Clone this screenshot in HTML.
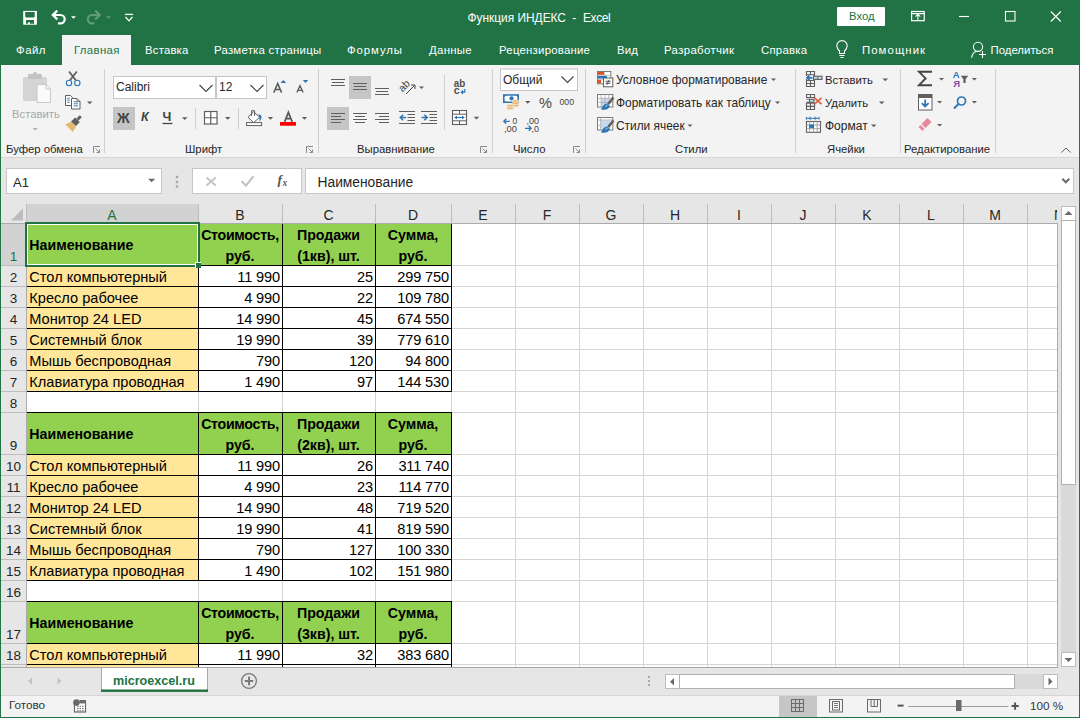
<!DOCTYPE html><html><head><meta charset="utf-8"><style>
*{margin:0;padding:0;box-sizing:border-box}
html,body{width:1080px;height:718px;overflow:hidden;background:#f3f3f3;font-family:"Liberation Sans",sans-serif;position:relative}
div{position:absolute}
.t{white-space:nowrap;line-height:1}
svg{position:absolute;overflow:visible}
.tab{top:43px;color:#fff;font-size:11.4px;white-space:nowrap;line-height:14px}
.rt{font-size:11.3px;color:#262626;white-space:nowrap;line-height:13px}
.gl{top:143px;font-size:11.3px;color:#262626;white-space:nowrap;line-height:13px}
.sep{width:1px;background:#d4d4d4}
.ch{font-size:14px;color:#262626;text-align:center;line-height:18px;top:206px;height:18px}
.rh{font-size:13.5px;color:#262626;text-align:center;left:1px;width:25px;line-height:14px}
.c{font-size:14.6px;color:#000;white-space:nowrap;line-height:16px}
.cb{font-size:14.2px;font-weight:bold;color:#000;white-space:nowrap;line-height:16px}
</style></head><body>
<div style="left:0;top:0;width:1080px;height:65px;background:#217346"></div>
<div class="t" style="left:467.5px;top:12.5px;color:#fff;font-size:11.9px">Функция ИНДЕКС</div>
<div class="t" style="left:572.3px;top:12.5px;color:#fff;font-size:11.9px">-</div>
<div class="t" style="left:583px;top:12.5px;color:#fff;font-size:11.9px;letter-spacing:-0.35px">Excel</div>
<div style="left:62px;top:35px;width:69px;height:30px;background:#f3f3f3"></div>
<div style="left:837px;top:7px;width:48px;height:19px;background:#fff;border-radius:1px"></div>
<div class="t" style="left:849px;top:10.5px;font-size:11.3px;color:#217346">Вход</div>
<div class="tab" style="left:16px;letter-spacing:0.5px">Файл</div>
<div class="tab" style="left:74px;letter-spacing:0.33px;color:#217346">Главная</div>
<div class="tab" style="left:145px;letter-spacing:0.17px">Вставка</div>
<div class="tab" style="left:214px;letter-spacing:0.24px">Разметка страницы</div>
<div class="tab" style="left:347px;letter-spacing:0.9px">Формулы</div>
<div class="tab" style="left:429px;letter-spacing:0.3px">Данные</div>
<div class="tab" style="left:499px;letter-spacing:0.23px">Рецензирование</div>
<div class="tab" style="left:617px;letter-spacing:0.2px">Вид</div>
<div class="tab" style="left:664px;letter-spacing:0.36px">Разработчик</div>
<div class="tab" style="left:761px;letter-spacing:0.22px">Справка</div>
<div class="tab" style="left:862px;letter-spacing:1.05px">Помощник</div>
<div class="tab" style="left:990.5px;letter-spacing:0px">Поделиться</div>
<div style="left:1px;top:65px;width:1078px;height:93px;background:#f3f3f3;border-bottom:1px solid #d6d6d6"></div>
<svg style="left:0;top:0" width="1080" height="160" viewBox="0 0 1080 160">
<rect x="23.2" y="10.9" width="13.7" height="13.8" fill="#ffffff"/>
<path d="M25.2 12H34.7V16.5L33.8 17.4H26.1L25.2 16.5Z" fill="#217346"/>
<path d="M26 20H34V23.7H30V22.3H28V23.7H26Z" fill="#217346"/>
<path d="M53 15H60.5A4.2 4.2 0 0 1 60.5 23.4H58" fill="none" stroke="#ffffff" stroke-width="2.2"/>
<path d="M57.3 10.6L52.8 15L57.3 19.4" fill="none" stroke="#ffffff" stroke-width="2.2"/>
<path d="M71 16.2H76L73.5 18.7Z" fill="#ffffff"/>
<path d="M99.5 15H92A4.2 4.2 0 0 0 92 23.4H94.5" fill="none" stroke="#5e9c78" stroke-width="2.2"/>
<path d="M95.2 10.6L99.7 15L95.2 19.4" fill="none" stroke="#5e9c78" stroke-width="2.2"/>
<path d="M106 16.2H111L108.5 18.7Z" fill="#5e9c78"/>
<path d="M125 14.4H133" stroke="#ffffff" stroke-width="1.3"/>
<path d="M125.5 17L129 20.8L132.5 17" fill="none" stroke="#ffffff" stroke-width="1.2"/>
<rect x="911.6" y="11.5" width="12.6" height="9.2" fill="none" stroke="#ffffff" stroke-width="1.2"/>
<path d="M911.6 13.6H924.2" stroke="#ffffff" stroke-width="1.2"/>
<path d="M917.9 20.5V14.3M915.5 16.7L917.9 14.3L920.3 16.7" fill="none" stroke="#ffffff" stroke-width="1.1"/>
<path d="M959 16.5H969" stroke="#ffffff" stroke-width="1.1"/>
<rect x="1005.5" y="11.5" width="9.5" height="9.5" fill="none" stroke="#ffffff" stroke-width="1.1"/>
<path d="M1050.8 11.5L1060.8 21.5M1060.8 11.5L1050.8 21.5" stroke="#ffffff" stroke-width="1.1"/>
<path d="M839.5 51C837.5 49.3 836.8 47.6 836.8 45.8A5.2 5.2 0 0 1 847.2 45.8C847.2 47.6 846.5 49.3 844.5 51V53.5H839.5Z" fill="none" stroke="#ffffff" stroke-width="1.1"/>
<path d="M839.5 55.5H844.5M840.5 57.5H843.5" stroke="#ffffff" stroke-width="1"/>
<circle cx="978" cy="46.8" r="4.6" fill="none" stroke="#ffffff" stroke-width="1.1"/>
<path d="M971.6 57.8C972 54.5 973.5 52.3 976 51.4" fill="none" stroke="#ffffff" stroke-width="1.1"/>
<path d="M979 54.5H986M982.5 51V58" stroke="#ffffff" stroke-width="1.1"/>
<rect x="23" y="77" width="24" height="24" rx="1.5" fill="#d4d4d4"/>
<rect x="28" y="74" width="14" height="5" rx="1" fill="#c4c4c4"/>
<circle cx="35" cy="73.5" r="1.8" fill="#c4c4c4"/>
<path d="M37 84.5H46L50.5 89V102.5H37Z" fill="#fafafa" stroke="#c8c8c8" stroke-width="1"/>
<path d="M46 84.5V89H50.5" fill="none" stroke="#c8c8c8" stroke-width="1"/>
<path d="M32.5 128H38L35.25 130.75Z" fill="#b8b8b8"/>
<path d="M69 71.5L75.8 80.3M76.8 71.5L70 80.3" stroke="#5f5f5f" stroke-width="1.8"/>
<circle cx="69" cy="83" r="2.7" fill="#f3f3f3" stroke="#2e75b6" stroke-width="1.1"/>
<circle cx="77.3" cy="83" r="2.7" fill="#f3f3f3" stroke="#2e75b6" stroke-width="1.1"/>
<path d="M65.5 95.5H70.5L72.5 97.5V105.5H65.5Z" fill="#fff" stroke="#5f5f5f" stroke-width="1"/>
<path d="M71.5 98.5H77L80 101.5V109H71.5Z" fill="#fff" stroke="#5f5f5f" stroke-width="1"/>
<path d="M77 98.5V101.5H80" fill="none" stroke="#5f5f5f" stroke-width="0.8"/>
<path d="M67.2 98.2H69.8M67.2 100.2H69.8M67.2 102.3H69.8M73.6 101.8H78M73.6 103.8H78M73.6 105.9H78" stroke="#2e75b6" stroke-width="0.9"/>
<path d="M87 101.5H92.5L89.75 104.25Z" fill="#5f5f5f"/>
<path d="M65.3 124.5L71.5 121.8L76 126.4L72.8 132Z" fill="#e5b86a"/>
<path d="M71 121.5L75.2 117.5L79.8 122L76 126Z" fill="#5f5f5f"/>
<path d="M76.5 118.5L79.8 115.2L81.8 117.2L78.5 120.5Z" fill="#5f5f5f"/>
<path d="M93.5 153V146.5H100" fill="none" stroke="#8a8a8a" stroke-width="1"/>
<path d="M95.5 148.5L99.5 152.5M96.5 152.5H99.5V149.5" fill="none" stroke="#8a8a8a" stroke-width="1"/>
<path d="M306.5 153V146.5H313" fill="none" stroke="#8a8a8a" stroke-width="1"/>
<path d="M308.5 148.5L312.5 152.5M309.5 152.5H312.5V149.5" fill="none" stroke="#8a8a8a" stroke-width="1"/>
<path d="M480.5 153V146.5H487" fill="none" stroke="#8a8a8a" stroke-width="1"/>
<path d="M482.5 148.5L486.5 152.5M483.5 152.5H486.5V149.5" fill="none" stroke="#8a8a8a" stroke-width="1"/>
<path d="M573.5 153V146.5H580" fill="none" stroke="#8a8a8a" stroke-width="1"/>
<path d="M575.5 148.5L579.5 152.5M576.5 152.5H579.5V149.5" fill="none" stroke="#8a8a8a" stroke-width="1"/>
<rect x="113.5" y="76.5" width="102" height="22" fill="#fff" stroke="#c6c6c6"/>
<rect x="216.5" y="76.5" width="50" height="22" fill="#fff" stroke="#c6c6c6"/>
<path d="M199.5 85L206 91.5L212.5 85" fill="none" stroke="#444444" stroke-width="1.1"/>
<path d="M250.5 85L257 91.5L263.5 85" fill="none" stroke="#444444" stroke-width="1.1"/>
<path d="M280.5 83L283.4 80L286.3 83Z" fill="#2e75b6"/>
<path d="M302.8 80H308.2L305.5 83Z" fill="#2e75b6"/>
<rect x="113" y="107" width="22" height="23" fill="#c5c5c5"/>
<path d="M182 117.2H187.5L184.75 119.95Z" fill="#5f5f5f"/>
<path d="M162.5 123.5H172.5" stroke="#444444" stroke-width="1.3"/>
<path d="M195.5 108V129" stroke="#d0d0d0"/>
<rect x="204.5" y="111.5" width="12.5" height="12.5" fill="#fff" stroke="#5f5f5f" stroke-width="1.2"/>
<path d="M210.75 111.5V124M204.5 117.75H217" stroke="#5f5f5f" stroke-width="1.2"/>
<path d="M225 117H230.5L227.75 119.75Z" fill="#5f5f5f"/>
<path d="M238.5 108V129" stroke="#d0d0d0"/>
<path d="M248 117.3L253.6 111.8L259.7 117.2L253.6 122.6Z" fill="#fff" stroke="#5f5f5f" stroke-width="1"/>
<path d="M251.6 116V110.7H254.6V115.8" fill="none" stroke="#5f5f5f" stroke-width="1"/>
<path d="M258.3 114.2C261.5 114.6 263 117.3 259.6 121.4L259.4 117.2Z" fill="#2e75b6"/>
<rect x="246.6" y="122.6" width="15" height="3" fill="#fff" stroke="#5f5f5f" stroke-width="1"/>
<path d="M267.8 117H273.2L270.5 119.69999999999999Z" fill="#5f5f5f"/>
<rect x="280" y="122" width="16" height="3.7" fill="#ff0000"/>
<path d="M284.6 121.9L288.4 112.4L292.2 121.9M285.9 118.6H290.9" fill="none" stroke="#595959" stroke-width="1.7"/>
<path d="M301.8 117H307.2L304.5 119.69999999999999Z" fill="#5f5f5f"/>
<path d="M273.8 92.6L277.7 83.4L281.6 92.6M275.2 89.6H280.2" fill="none" stroke="#595959" stroke-width="1.5"/>
<path d="M296.9 92.6L300 85.7L303.1 92.6M298 90.3H302" fill="none" stroke="#595959" stroke-width="1.3"/>
<rect x="349" y="76" width="22" height="23" fill="#c5c5c5"/>
<rect x="327" y="107" width="22" height="23" fill="#c5c5c5"/>
<path d="M331 79.5H345M332 82.5H344M331 85.5H345" stroke="#5f5f5f" stroke-width="1"/>
<path d="M353 83.5H367M354 86.5H366M353 89.5H367" stroke="#5f5f5f" stroke-width="1"/>
<path d="M375 88.5H389M376 91.5H388M375 94.5H389" stroke="#5f5f5f" stroke-width="1"/>
<path d="M331 113.5H345M331 116.5H341M331 119.5H345M331 122.5H341" stroke="#5f5f5f" stroke-width="1"/>
<path d="M353 113.5H367M355 116.5H365M353 119.5H367M355 122.5H365" stroke="#5f5f5f" stroke-width="1"/>
<path d="M375 113.5H389M379 116.5H389M375 119.5H389M379 122.5H389" stroke="#5f5f5f" stroke-width="1"/>
<path d="M399 111.5H415M407.5 114.5H415M407.5 117.5H415M407.5 120.5H415M399 123.5H415" stroke="#5f5f5f" stroke-width="1"/>
<path d="M406 117.5H400.5M403.2 114.8L400.3 117.5L403.2 120.2" fill="none" stroke="#2e75b6" stroke-width="1.5"/>
<path d="M421 111.5H437M429.5 114.5H437M429.5 117.5H437M429.5 120.5H437M421 123.5H437" stroke="#5f5f5f" stroke-width="1"/>
<path d="M421.5 117.5H427M424.3 114.8L427.2 117.5L424.3 120.2" fill="none" stroke="#2e75b6" stroke-width="1.5"/>
<g transform="translate(404.5 85) rotate(-45)"><text x="-6.8" y="3.8" font-family="Liberation Sans" font-size="10.5" fill="#444444">ab</text></g>
<path d="M406 94L414.5 85.5M411 85H415V89" fill="none" stroke="#444444" stroke-width="1"/>
<path d="M419 86.5H424L421.5 89.0Z" fill="#5f5f5f"/>
<path d="M444.5 75V130" stroke="#d0d0d0"/>
<text x="453.8" y="86.5" font-family="Liberation Sans" font-size="10.6" font-weight="bold" fill="#505050" textLength="11.5" lengthAdjust="spacingAndGlyphs">ab</text>
<text x="453.8" y="93.8" font-family="Liberation Sans" font-size="10.6" font-weight="bold" fill="#505050">c</text>
<path d="M464.8 89V92.2H461.3M463 90.5L461.2 92.2L463 93.9" fill="none" stroke="#2e75b6" stroke-width="1.2"/>
<rect x="452.5" y="110.5" width="14" height="14" fill="#fff" stroke="#5f5f5f" stroke-width="1.1"/>
<path d="M452.5 114.2H466.5M452.5 120.8H466.5M459.5 110.5V114.2M459.5 120.8V124.5" stroke="#5f5f5f" stroke-width="1"/>
<path d="M456.5 117.5H462.5" stroke="#2e75b6" stroke-width="1.1"/>
<path d="M454.2 117.5L457 115.6V119.4Z M464.8 117.5L462 115.6V119.4Z" fill="#2e75b6"/>
<path d="M473.7 116.8H479.2L476.45 119.55Z" fill="#5f5f5f"/>
<rect x="500.5" y="69" width="77" height="21.5" fill="#fff" stroke="#c6c6c6"/>
<path d="M561.5 76.5L567.5 82.5L573.5 76.5" fill="none" stroke="#444444" stroke-width="1.1"/>
<rect x="503" y="94.2" width="16" height="8.8" fill="#2e75b6"/>
<rect x="504.6" y="95.8" width="12.8" height="5.6" rx="1.5" fill="#fff"/>
<circle cx="511.5" cy="98.3" r="2.1" fill="#2e75b6"/>
<ellipse cx="515.5" cy="101" rx="3.6" ry="1.3" fill="#e9b96e" stroke="#f3f3f3" stroke-width="0.5"/>
<ellipse cx="515.5" cy="103.3" rx="3.6" ry="1.3" fill="#e9b96e" stroke="#f3f3f3" stroke-width="0.5"/>
<ellipse cx="515.5" cy="105.6" rx="3.6" ry="1.3" fill="#e9b96e" stroke="#f3f3f3" stroke-width="0.5"/>
<ellipse cx="510.3" cy="105.8" rx="3.6" ry="1.3" fill="#e9b96e" stroke="#f3f3f3" stroke-width="0.5"/>
<ellipse cx="510.3" cy="108.2" rx="3.6" ry="1.3" fill="#e9b96e" stroke="#f3f3f3" stroke-width="0.5"/>
<path d="M525 101H530.5L527.75 103.75Z" fill="#5f5f5f"/>
<text x="539" y="108" font-family="Liberation Sans" font-size="14.5" fill="#444444">%</text>
<text x="559.5" y="104.8" font-family="Liberation Sans" font-size="9.6" fill="#444444" textLength="14.5" lengthAdjust="spacingAndGlyphs">000</text>
<text x="512.5" y="123.8" font-family="Liberation Sans" font-size="8.5" fill="#444444">0</text>
<text x="504" y="132.3" font-family="Liberation Sans" font-size="8.5" fill="#444444" textLength="13" lengthAdjust="spacingAndGlyphs">,00</text>
<path d="M509.8 121.3H503.8M506.3 118.8L503.8 121.3L506.3 123.8" fill="none" stroke="#2e75b6" stroke-width="1.3"/>
<text x="526.5" y="123.8" font-family="Liberation Sans" font-size="8.5" fill="#444444" textLength="12.5" lengthAdjust="spacingAndGlyphs">,00</text>
<text x="531.5" y="132.3" font-family="Liberation Sans" font-size="8.5" fill="#444444" textLength="7.5" lengthAdjust="spacingAndGlyphs">,0</text>
<path d="M525 128.3H531.2M528.7 125.8L531.2 128.3L528.7 130.8" fill="none" stroke="#2e75b6" stroke-width="1.3"/>
<rect x="597.5" y="71.5" width="13.3" height="12.3" fill="#fff" stroke="#7a7a7a"/>
<path d="M604.2 71.5V83.8M597.5 75.3H610.8M597.5 79.2H610.8" stroke="#a8a8a8" stroke-width="0.8"/>
<rect x="598" y="72" width="6" height="2.8" fill="#e04f26"/><rect x="598" y="76" width="9" height="2.5" fill="#2e75b6"/><rect x="598" y="79.8" width="3.2" height="3.5" fill="#e04f26"/>
<rect x="603.5" y="78" width="9.3" height="8.8" fill="#fff" stroke="#5f5f5f"/>
<path d="M605.5 81.3H610.6M605.5 83.3H610.6M609.2 79.8L606.8 84.8" stroke="#444444" stroke-width="0.9"/>
<rect x="597.5" y="94.5" width="15.3" height="12.5" fill="#fff" stroke="#7a7a7a"/>
<rect x="601" y="98.5" width="7.5" height="8" fill="#c5d9ee"/>
<path d="M597.5 98.3H612.8M597.5 102.5H612.8M601.2 94.5V107M605 94.5V107M608.8 94.5V107" stroke="#a8a8a8" stroke-width="0.8"/>
<path d="M607.2 103.2L612.6 96.6L614.3 98.2L609.4 104.8Z" fill="#5f5f5f"/>
<path d="M601.2 109.8C601.8 106.3 604.3 103.8 607.3 103.5L609.8 105.9C609.3 108.5 606.3 110 601.2 109.8Z" fill="#2e75b6"/>
<path d="M605.5 106.5L607.5 105" stroke="#fff" stroke-width="0.8"/>
<rect x="597.5" y="117.5" width="15.3" height="12.5" fill="#fff" stroke="#7a7a7a"/>
<rect x="600.8" y="120.3" width="9.5" height="8.5" fill="#c5d9ee"/>
<path d="M597.5 120H612.8M600.6 117.5V130M597.5 125.3H600.6" stroke="#a8a8a8" stroke-width="0.8"/>
<path d="M607.2 126.2L612.6 119.6L614.3 121.2L609.4 127.8Z" fill="#5f5f5f"/>
<path d="M601.2 132.8C601.8 129.3 604.3 126.8 607.3 126.5L609.8 128.9C609.3 131.5 606.3 133 601.2 132.8Z" fill="#2e75b6"/>
<path d="M605.5 129.5L607.5 128" stroke="#fff" stroke-width="0.8"/>
<path d="M771 78.5H776L773.5 81.0Z" fill="#5f5f5f"/>
<path d="M775 101.5H780L777.5 104.0Z" fill="#5f5f5f"/>
<path d="M687.5 124.5H692.5L690.0 127.0Z" fill="#5f5f5f"/>
<path d="M806.5 71.5H814.5V74.8H806.5ZM810.5 71.5V74.8M806.5 80.5H814.5V86.5H806.5ZM806.5 83.5H814.5M810.5 80.5V86.5M814.5 74.8V80.5M806.5 74.8V76M806.5 79V80.5" fill="none" stroke="#5f5f5f" stroke-width="1.1"/>
<rect x="813.5" y="76.2" width="8.5" height="3.2" fill="#c5d9ee" stroke="#5f5f5f" stroke-width="1.1"/>
<path d="M817.7 76.2V79.4" stroke="#5f5f5f" stroke-width="0.9"/>
<path d="M812.5 77.8H807M809.4 75.4L807 77.8L809.4 80.2" fill="none" stroke="#2e75b6" stroke-width="1.7"/>
<path d="M806.5 94.5H814.5V97.5H806.5ZM810.5 94.5V97.5M806.5 103.3H814.5V109.5H806.5ZM806.5 106.4H814.5M810.5 103.3V109.5M806.5 99.3H809.6V102.3H806.5" fill="none" stroke="#5f5f5f" stroke-width="1.1"/>
<rect x="809.6" y="99.3" width="4.4" height="3" fill="#c5d9ee" stroke="#5f5f5f" stroke-width="1.1"/>
<path d="M814.5 97.8L821.5 104.2M821.5 97.8L814.5 104.2" stroke="#e0603a" stroke-width="1.7"/>
<path d="M806.5 118.3H819M806.4 116.9V119.7M819 116.9V119.7M809 118.3L810.8 116.9M809 118.3L810.8 119.7M816.4 118.3L814.6 116.9M816.4 118.3L814.6 119.7" stroke="#2e75b6" stroke-width="1" fill="none"/>
<rect x="806.5" y="121.5" width="14" height="10.8" fill="#fff" stroke="#5f5f5f" stroke-width="1.1"/>
<path d="M806.5 125H820.5M806.5 128.7H820.5M809.7 121.5V132.3M813.5 121.5V132.3M817.2 121.5V132.3" stroke="#9a9a9a" stroke-width="0.9"/>
<rect x="809.2" y="124.5" width="4.8" height="3.6" fill="#2e75b6"/>
<path d="M882.5 78.5H888L885.25 81.25Z" fill="#5f5f5f"/>
<path d="M879 101.5H884.5L881.75 104.25Z" fill="#5f5f5f"/>
<path d="M871 124.5H876.5L873.75 127.25Z" fill="#5f5f5f"/>
<path d="M932 71.8H919L925.6 78.4L919 85.2H932" fill="none" stroke="#444444" stroke-width="1.9"/>
<path d="M939 78H944L941.5 80.5Z" fill="#5f5f5f"/>
<text x="952.8" y="78.3" font-family="Liberation Sans" font-size="9.5" font-weight="bold" fill="#2e75b6">A</text>
<text x="953.2" y="87.3" font-family="Liberation Sans" font-size="9.5" font-weight="bold" fill="#7f4fa8">Я</text>
<path d="M960.8 75.7H968.2L965.6 79.2V83H963.4V79.2Z" fill="#5f5f5f"/>
<path d="M971.8 78H977L974.4 80.60000000000002Z" fill="#5f5f5f"/>
<rect x="918.5" y="94.5" width="13.5" height="15.5" fill="#fff" stroke="#5f5f5f"/>
<rect x="918.5" y="94.5" width="13.5" height="3.5" fill="#5f5f5f"/>
<path d="M925.2 99.5V106.5M921.8 103.2L925.2 106.5L928.6 103.2" fill="none" stroke="#2e75b6" stroke-width="1.8"/>
<path d="M937 101H942.2L939.6 103.60000000000002Z" fill="#5f5f5f"/>
<circle cx="961.5" cy="101" r="4" fill="none" stroke="#2e75b6" stroke-width="1.7"/>
<path d="M958.5 104L954 108.5" stroke="#2e75b6" stroke-width="2"/>
<path d="M971.8 101H977L974.4 103.60000000000002Z" fill="#5f5f5f"/>
<path d="M921.5 124L927.5 118L931.5 122L925.5 128Z" fill="#e8899a"/>
<path d="M918.5 127L920.5 125L924.5 129L922.5 131Z" fill="#e8899a"/>
<path d="M937 124H942.2L939.6 126.60000000000002Z" fill="#5f5f5f"/>
<path d="M1061.5 152.5L1066 148L1070.5 152.5" fill="none" stroke="#5f5f5f" stroke-width="1"/>
<path d="M104.5 69V153" stroke="#d0d0d0"/>
<path d="M318.5 69V153" stroke="#d0d0d0"/>
<path d="M492.5 69V153" stroke="#d0d0d0"/>
<path d="M585.5 69V153" stroke="#d0d0d0"/>
<path d="M795.5 69V153" stroke="#d0d0d0"/>
<path d="M900.5 69V153" stroke="#d0d0d0"/>
<path d="M995.5 69V153" stroke="#d0d0d0"/>
</svg>
<div class="t" style="left:6px;top:143px;font-size:11.3px;color:#262626;line-height:13px">Буфер обмена</div>
<div class="t" style="left:185px;top:143px;font-size:11.3px;color:#262626;line-height:13px">Шрифт</div>
<div class="t" style="left:357px;top:143px;font-size:11.3px;color:#262626;line-height:13px">Выравнивание</div>
<div class="t" style="left:513px;top:143px;font-size:11.3px;color:#262626;line-height:13px">Число</div>
<div class="t" style="left:675px;top:143px;font-size:11.3px;color:#262626;line-height:13px">Стили</div>
<div class="t" style="left:827px;top:143px;font-size:11.3px;color:#262626;line-height:13px">Ячейки</div>
<div class="t" style="left:904px;top:143px;font-size:11.3px;color:#262626;line-height:13px">Редактирование</div>
<div class="t" style="left:12px;top:107.5px;font-size:11.3px;color:#a8a8a8;line-height:13px">Вставить</div>
<div class="t" style="left:116px;top:81px;font-size:12px;color:#262626;line-height:13px">Calibri</div>
<div class="t" style="left:219px;top:81px;font-size:12px;color:#262626;line-height:13px">12</div>
<div class="t" style="left:503px;top:74px;font-size:12px;color:#262626;line-height:13px">Общий</div>
<div class="t" style="left:616px;top:74px;font-size:11.9px;color:#262626;line-height:13px">Условное форматирование</div>
<div class="t" style="left:616px;top:97px;font-size:11.9px;color:#262626;line-height:13px">Форматировать как таблицу</div>
<div class="t" style="left:616px;top:120px;font-size:11.9px;color:#262626;line-height:13px">Стили ячеек</div>
<div class="t" style="left:825px;top:74px;font-size:11.3px;color:#262626;line-height:13px">Вставить</div>
<div class="t" style="left:825px;top:97px;font-size:11.3px;color:#262626;line-height:13px">Удалить</div>
<div class="t" style="left:825px;top:120px;font-size:12px;color:#262626;line-height:13px">Формат</div>
<div class="t" style="left:117px;top:112.5px;font-size:14px;font-weight:bold;color:#444;line-height:11px">Ж</div>
<div class="t" style="left:141px;top:112px;font-size:12.5px;font-weight:bold;font-style:italic;color:#444;line-height:11px">К</div>
<div class="t" style="left:162.5px;top:112px;font-size:12.5px;font-weight:bold;color:#444;line-height:11px">Ч</div>
<div style="left:1px;top:158px;width:1078px;height:46px;background:#e6e6e6"></div>
<div style="left:6px;top:168px;width:156px;height:26px;background:#fff;border:1px solid #c6c6c6"></div>
<div class="t" style="left:13px;top:176px;font-size:13px;color:#262626">A1</div>
<div style="left:192px;top:168px;width:110px;height:26px;background:#fff;border:1px solid #c6c6c6"></div>
<div style="left:305px;top:168px;width:769px;height:26px;background:#fff;border:1px solid #c6c6c6"></div>
<div class="t" style="left:317.5px;top:176px;font-size:13.8px;color:#262626">Наименование</div>
<div style="left:1px;top:204px;width:1078px;height:463px;background:#fff"></div>
<div style="left:1px;top:204px;width:1057px;height:19px;background:#e6e6e6"></div>
<div style="left:1px;top:223px;width:25px;height:444px;background:#e6e6e6"></div>
<div style="left:27px;top:204px;width:171px;height:19px;background:#d2d2d2"></div>
<div style="left:1px;top:224px;width:25px;height:41px;background:#d2d2d2"></div>
<div style="left:27px;top:224px;width:424px;height:41px;background:#92d050"></div>
<div style="left:27px;top:413px;width:424px;height:41px;background:#92d050"></div>
<div style="left:27px;top:602px;width:424px;height:41px;background:#92d050"></div>
<div style="left:27px;top:266px;width:171px;height:125px;background:#ffe699"></div>
<div style="left:27px;top:455px;width:171px;height:125px;background:#ffe699"></div>
<div style="left:27px;top:644px;width:171px;height:23px;background:#ffe699"></div>
<div style="left:198px;top:223px;width:1px;height:444px;background:#d4d4d4"></div>
<div style="left:282px;top:223px;width:1px;height:444px;background:#d4d4d4"></div>
<div style="left:375px;top:223px;width:1px;height:444px;background:#d4d4d4"></div>
<div style="left:451px;top:223px;width:1px;height:444px;background:#d4d4d4"></div>
<div style="left:515px;top:223px;width:1px;height:444px;background:#d4d4d4"></div>
<div style="left:579px;top:223px;width:1px;height:444px;background:#d4d4d4"></div>
<div style="left:643px;top:223px;width:1px;height:444px;background:#d4d4d4"></div>
<div style="left:707px;top:223px;width:1px;height:444px;background:#d4d4d4"></div>
<div style="left:771px;top:223px;width:1px;height:444px;background:#d4d4d4"></div>
<div style="left:835px;top:223px;width:1px;height:444px;background:#d4d4d4"></div>
<div style="left:899px;top:223px;width:1px;height:444px;background:#d4d4d4"></div>
<div style="left:963px;top:223px;width:1px;height:444px;background:#d4d4d4"></div>
<div style="left:1027px;top:223px;width:1px;height:444px;background:#d4d4d4"></div>
<div style="left:27px;top:265px;width:1030px;height:1px;background:#d4d4d4"></div>
<div style="left:27px;top:286px;width:1030px;height:1px;background:#d4d4d4"></div>
<div style="left:27px;top:307px;width:1030px;height:1px;background:#d4d4d4"></div>
<div style="left:27px;top:328px;width:1030px;height:1px;background:#d4d4d4"></div>
<div style="left:27px;top:349px;width:1030px;height:1px;background:#d4d4d4"></div>
<div style="left:27px;top:370px;width:1030px;height:1px;background:#d4d4d4"></div>
<div style="left:27px;top:391px;width:1030px;height:1px;background:#d4d4d4"></div>
<div style="left:27px;top:412px;width:1030px;height:1px;background:#d4d4d4"></div>
<div style="left:27px;top:454px;width:1030px;height:1px;background:#d4d4d4"></div>
<div style="left:27px;top:475px;width:1030px;height:1px;background:#d4d4d4"></div>
<div style="left:27px;top:496px;width:1030px;height:1px;background:#d4d4d4"></div>
<div style="left:27px;top:517px;width:1030px;height:1px;background:#d4d4d4"></div>
<div style="left:27px;top:538px;width:1030px;height:1px;background:#d4d4d4"></div>
<div style="left:27px;top:559px;width:1030px;height:1px;background:#d4d4d4"></div>
<div style="left:27px;top:580px;width:1030px;height:1px;background:#d4d4d4"></div>
<div style="left:27px;top:601px;width:1030px;height:1px;background:#d4d4d4"></div>
<div style="left:27px;top:643px;width:1030px;height:1px;background:#d4d4d4"></div>
<div style="left:27px;top:664px;width:1030px;height:1px;background:#d4d4d4"></div>
<div style="left:26px;top:204px;width:1px;height:19px;background:#bdbdbd"></div>
<div style="left:198px;top:204px;width:1px;height:19px;background:#bdbdbd"></div>
<div style="left:282px;top:204px;width:1px;height:19px;background:#bdbdbd"></div>
<div style="left:375px;top:204px;width:1px;height:19px;background:#bdbdbd"></div>
<div style="left:451px;top:204px;width:1px;height:19px;background:#bdbdbd"></div>
<div style="left:515px;top:204px;width:1px;height:19px;background:#bdbdbd"></div>
<div style="left:579px;top:204px;width:1px;height:19px;background:#bdbdbd"></div>
<div style="left:643px;top:204px;width:1px;height:19px;background:#bdbdbd"></div>
<div style="left:707px;top:204px;width:1px;height:19px;background:#bdbdbd"></div>
<div style="left:771px;top:204px;width:1px;height:19px;background:#bdbdbd"></div>
<div style="left:835px;top:204px;width:1px;height:19px;background:#bdbdbd"></div>
<div style="left:899px;top:204px;width:1px;height:19px;background:#bdbdbd"></div>
<div style="left:963px;top:204px;width:1px;height:19px;background:#bdbdbd"></div>
<div style="left:1027px;top:204px;width:1px;height:19px;background:#bdbdbd"></div>
<div style="left:1px;top:265px;width:25px;height:1px;background:#bdbdbd"></div>
<div style="left:1px;top:286px;width:25px;height:1px;background:#bdbdbd"></div>
<div style="left:1px;top:307px;width:25px;height:1px;background:#bdbdbd"></div>
<div style="left:1px;top:328px;width:25px;height:1px;background:#bdbdbd"></div>
<div style="left:1px;top:349px;width:25px;height:1px;background:#bdbdbd"></div>
<div style="left:1px;top:370px;width:25px;height:1px;background:#bdbdbd"></div>
<div style="left:1px;top:391px;width:25px;height:1px;background:#bdbdbd"></div>
<div style="left:1px;top:412px;width:25px;height:1px;background:#bdbdbd"></div>
<div style="left:1px;top:454px;width:25px;height:1px;background:#bdbdbd"></div>
<div style="left:1px;top:475px;width:25px;height:1px;background:#bdbdbd"></div>
<div style="left:1px;top:496px;width:25px;height:1px;background:#bdbdbd"></div>
<div style="left:1px;top:517px;width:25px;height:1px;background:#bdbdbd"></div>
<div style="left:1px;top:538px;width:25px;height:1px;background:#bdbdbd"></div>
<div style="left:1px;top:559px;width:25px;height:1px;background:#bdbdbd"></div>
<div style="left:1px;top:580px;width:25px;height:1px;background:#bdbdbd"></div>
<div style="left:1px;top:601px;width:25px;height:1px;background:#bdbdbd"></div>
<div style="left:1px;top:643px;width:25px;height:1px;background:#bdbdbd"></div>
<div style="left:1px;top:664px;width:25px;height:1px;background:#bdbdbd"></div>
<div style="left:1px;top:223px;width:1056px;height:1px;background:#ababab"></div>
<div style="left:26px;top:223px;width:1px;height:444px;background:#ababab"></div>
<div style="left:1057px;top:223px;width:1px;height:444px;background:#ababab"></div>
<div style="left:27px;top:222px;width:171px;height:2px;background:#217346"></div>
<div style="left:25px;top:224px;width:2px;height:41px;background:#217346"></div>
<div style="left:26px;top:223px;width:1px;height:169px;background:#000"></div>
<div style="left:198px;top:223px;width:1px;height:169px;background:#000"></div>
<div style="left:282px;top:223px;width:1px;height:169px;background:#000"></div>
<div style="left:375px;top:223px;width:1px;height:169px;background:#000"></div>
<div style="left:451px;top:223px;width:1px;height:169px;background:#000"></div>
<div style="left:26px;top:223px;width:426px;height:1px;background:#000"></div>
<div style="left:26px;top:265px;width:426px;height:1px;background:#000"></div>
<div style="left:26px;top:286px;width:426px;height:1px;background:#000"></div>
<div style="left:26px;top:307px;width:426px;height:1px;background:#000"></div>
<div style="left:26px;top:328px;width:426px;height:1px;background:#000"></div>
<div style="left:26px;top:349px;width:426px;height:1px;background:#000"></div>
<div style="left:26px;top:370px;width:426px;height:1px;background:#000"></div>
<div style="left:26px;top:391px;width:426px;height:1px;background:#000"></div>
<div style="left:26px;top:412px;width:1px;height:169px;background:#000"></div>
<div style="left:198px;top:412px;width:1px;height:169px;background:#000"></div>
<div style="left:282px;top:412px;width:1px;height:169px;background:#000"></div>
<div style="left:375px;top:412px;width:1px;height:169px;background:#000"></div>
<div style="left:451px;top:412px;width:1px;height:169px;background:#000"></div>
<div style="left:26px;top:412px;width:426px;height:1px;background:#000"></div>
<div style="left:26px;top:454px;width:426px;height:1px;background:#000"></div>
<div style="left:26px;top:475px;width:426px;height:1px;background:#000"></div>
<div style="left:26px;top:496px;width:426px;height:1px;background:#000"></div>
<div style="left:26px;top:517px;width:426px;height:1px;background:#000"></div>
<div style="left:26px;top:538px;width:426px;height:1px;background:#000"></div>
<div style="left:26px;top:559px;width:426px;height:1px;background:#000"></div>
<div style="left:26px;top:580px;width:426px;height:1px;background:#000"></div>
<div style="left:26px;top:601px;width:1px;height:67px;background:#000"></div>
<div style="left:198px;top:601px;width:1px;height:67px;background:#000"></div>
<div style="left:282px;top:601px;width:1px;height:67px;background:#000"></div>
<div style="left:375px;top:601px;width:1px;height:67px;background:#000"></div>
<div style="left:451px;top:601px;width:1px;height:67px;background:#000"></div>
<div style="left:26px;top:601px;width:426px;height:1px;background:#000"></div>
<div style="left:26px;top:643px;width:426px;height:1px;background:#000"></div>
<div style="left:26px;top:664px;width:426px;height:1px;background:#000"></div>
<div style="left:198px;top:223px;width:859px;height:1px;background:#ababab"></div>
<div style="left:26px;top:223px;width:1px;height:444px;background:#ababab"></div>
<div class="ch" style="left:26px;width:172px;color:#217346">A</div>
<div class="ch" style="left:198px;width:84px;color:#262626">B</div>
<div class="ch" style="left:282px;width:93px;color:#262626">C</div>
<div class="ch" style="left:375px;width:76px;color:#262626">D</div>
<div class="ch" style="left:451px;width:64px;color:#262626">E</div>
<div class="ch" style="left:515px;width:64px;color:#262626">F</div>
<div class="ch" style="left:579px;width:64px;color:#262626">G</div>
<div class="ch" style="left:643px;width:64px;color:#262626">H</div>
<div class="ch" style="left:707px;width:64px;color:#262626">I</div>
<div class="ch" style="left:771px;width:64px;color:#262626">J</div>
<div class="ch" style="left:835px;width:64px;color:#262626">K</div>
<div class="ch" style="left:899px;width:64px;color:#262626">L</div>
<div class="ch" style="left:963px;width:64px;color:#262626">M</div>
<div style="left:1027px;top:204px;width:30px;height:19px;overflow:hidden"><div class="ch" style="left:0;top:2px;width:64px;color:#262626">N</div></div>
<div class="rh" style="top:250px;color:#217346">1</div>
<div class="rh" style="top:271px;color:#262626">2</div>
<div class="rh" style="top:292px;color:#262626">3</div>
<div class="rh" style="top:313px;color:#262626">4</div>
<div class="rh" style="top:334px;color:#262626">5</div>
<div class="rh" style="top:355px;color:#262626">6</div>
<div class="rh" style="top:376px;color:#262626">7</div>
<div class="rh" style="top:397px;color:#262626">8</div>
<div class="rh" style="top:439px;color:#262626">9</div>
<div class="rh" style="top:460px;color:#262626">10</div>
<div class="rh" style="top:481px;color:#262626">11</div>
<div class="rh" style="top:502px;color:#262626">12</div>
<div class="rh" style="top:523px;color:#262626">13</div>
<div class="rh" style="top:544px;color:#262626">14</div>
<div class="rh" style="top:565px;color:#262626">15</div>
<div class="rh" style="top:586px;color:#262626">16</div>
<div class="rh" style="top:628px;color:#262626">17</div>
<div class="rh" style="top:649px;color:#262626">18</div>
<div class="cb" style="left:29.3px;top:237px">Наименование</div>
<div class="cb" style="left:198px;width:84px;text-align:center;top:227px;letter-spacing:-0.3px">Стоимость,</div>
<div class="cb" style="left:198px;width:84px;text-align:center;top:248px">руб.</div>
<div class="cb" style="left:282px;width:93px;text-align:center;top:227px">Продажи</div>
<div class="cb" style="left:282px;width:93px;text-align:center;top:248px">(1кв), шт.</div>
<div class="cb" style="left:375px;width:76px;text-align:center;top:227px">Сумма,</div>
<div class="cb" style="left:375px;width:76px;text-align:center;top:248px">руб.</div>
<div class="c" style="left:29.3px;top:269px">Стол компьютерный</div>
<div class="c" style="right:800px;top:269px;letter-spacing:-0.15px">11 990</div>
<div class="c" style="right:707px;top:269px;letter-spacing:-0.15px">25</div>
<div class="c" style="right:631px;top:269px;letter-spacing:-0.15px">299 750</div>
<div class="c" style="left:29.3px;top:290px">Кресло рабочее</div>
<div class="c" style="right:800px;top:290px;letter-spacing:-0.15px">4 990</div>
<div class="c" style="right:707px;top:290px;letter-spacing:-0.15px">22</div>
<div class="c" style="right:631px;top:290px;letter-spacing:-0.15px">109 780</div>
<div class="c" style="left:29.3px;top:311px">Монитор 24 LED</div>
<div class="c" style="right:800px;top:311px;letter-spacing:-0.15px">14 990</div>
<div class="c" style="right:707px;top:311px;letter-spacing:-0.15px">45</div>
<div class="c" style="right:631px;top:311px;letter-spacing:-0.15px">674 550</div>
<div class="c" style="left:29.3px;top:332px">Системный блок</div>
<div class="c" style="right:800px;top:332px;letter-spacing:-0.15px">19 990</div>
<div class="c" style="right:707px;top:332px;letter-spacing:-0.15px">39</div>
<div class="c" style="right:631px;top:332px;letter-spacing:-0.15px">779 610</div>
<div class="c" style="left:29.3px;top:353px">Мышь беспроводная</div>
<div class="c" style="right:800px;top:353px;letter-spacing:-0.15px">790</div>
<div class="c" style="right:707px;top:353px;letter-spacing:-0.15px">120</div>
<div class="c" style="right:631px;top:353px;letter-spacing:-0.15px">94 800</div>
<div class="c" style="left:29.3px;top:374px">Клавиатура проводная</div>
<div class="c" style="right:800px;top:374px;letter-spacing:-0.15px">1 490</div>
<div class="c" style="right:707px;top:374px;letter-spacing:-0.15px">97</div>
<div class="c" style="right:631px;top:374px;letter-spacing:-0.15px">144 530</div>
<div class="cb" style="left:29.3px;top:426px">Наименование</div>
<div class="cb" style="left:198px;width:84px;text-align:center;top:416px;letter-spacing:-0.3px">Стоимость,</div>
<div class="cb" style="left:198px;width:84px;text-align:center;top:437px">руб.</div>
<div class="cb" style="left:282px;width:93px;text-align:center;top:416px">Продажи</div>
<div class="cb" style="left:282px;width:93px;text-align:center;top:437px">(2кв), шт.</div>
<div class="cb" style="left:375px;width:76px;text-align:center;top:416px">Сумма,</div>
<div class="cb" style="left:375px;width:76px;text-align:center;top:437px">руб.</div>
<div class="c" style="left:29.3px;top:458px">Стол компьютерный</div>
<div class="c" style="right:800px;top:458px;letter-spacing:-0.15px">11 990</div>
<div class="c" style="right:707px;top:458px;letter-spacing:-0.15px">26</div>
<div class="c" style="right:631px;top:458px;letter-spacing:-0.15px">311 740</div>
<div class="c" style="left:29.3px;top:479px">Кресло рабочее</div>
<div class="c" style="right:800px;top:479px;letter-spacing:-0.15px">4 990</div>
<div class="c" style="right:707px;top:479px;letter-spacing:-0.15px">23</div>
<div class="c" style="right:631px;top:479px;letter-spacing:-0.15px">114 770</div>
<div class="c" style="left:29.3px;top:500px">Монитор 24 LED</div>
<div class="c" style="right:800px;top:500px;letter-spacing:-0.15px">14 990</div>
<div class="c" style="right:707px;top:500px;letter-spacing:-0.15px">48</div>
<div class="c" style="right:631px;top:500px;letter-spacing:-0.15px">719 520</div>
<div class="c" style="left:29.3px;top:521px">Системный блок</div>
<div class="c" style="right:800px;top:521px;letter-spacing:-0.15px">19 990</div>
<div class="c" style="right:707px;top:521px;letter-spacing:-0.15px">41</div>
<div class="c" style="right:631px;top:521px;letter-spacing:-0.15px">819 590</div>
<div class="c" style="left:29.3px;top:542px">Мышь беспроводная</div>
<div class="c" style="right:800px;top:542px;letter-spacing:-0.15px">790</div>
<div class="c" style="right:707px;top:542px;letter-spacing:-0.15px">127</div>
<div class="c" style="right:631px;top:542px;letter-spacing:-0.15px">100 330</div>
<div class="c" style="left:29.3px;top:563px">Клавиатура проводная</div>
<div class="c" style="right:800px;top:563px;letter-spacing:-0.15px">1 490</div>
<div class="c" style="right:707px;top:563px;letter-spacing:-0.15px">102</div>
<div class="c" style="right:631px;top:563px;letter-spacing:-0.15px">151 980</div>
<div class="cb" style="left:29.3px;top:615px">Наименование</div>
<div class="cb" style="left:198px;width:84px;text-align:center;top:605px;letter-spacing:-0.3px">Стоимость,</div>
<div class="cb" style="left:198px;width:84px;text-align:center;top:626px">руб.</div>
<div class="cb" style="left:282px;width:93px;text-align:center;top:605px">Продажи</div>
<div class="cb" style="left:282px;width:93px;text-align:center;top:626px">(3кв), шт.</div>
<div class="cb" style="left:375px;width:76px;text-align:center;top:605px">Сумма,</div>
<div class="cb" style="left:375px;width:76px;text-align:center;top:626px">руб.</div>
<div class="c" style="left:29.3px;top:647px">Стол компьютерный</div>
<div class="c" style="right:800px;top:647px;letter-spacing:-0.15px">11 990</div>
<div class="c" style="right:707px;top:647px;letter-spacing:-0.15px">32</div>
<div class="c" style="right:631px;top:647px;letter-spacing:-0.15px">383 680</div>
<div style="left:25px;top:222px;width:175px;height:45px;border:2px solid #217346"></div>
<div style="left:27px;top:224px;width:171px;height:41px;border:1px solid #fff"></div>
<div style="left:195px;top:262px;width:6px;height:6px;background:#217346;border-left:1px solid #fff;border-top:1px solid #fff"></div>
<svg style="left:0;top:0" width="1080" height="718" viewBox="0 0 1080 718">
<path d="M148 178.7H155.3L151.65 182.2Z" fill="#6a6a6a"/>
<rect x="175.8" y="175.8" width="2.4" height="2.4" fill="#a6a6a6"/>
<rect x="175.8" y="180.8" width="2.4" height="2.4" fill="#a6a6a6"/>
<rect x="175.8" y="185.3" width="2.4" height="2.4" fill="#a6a6a6"/>
<path d="M206.5 177.5L215.8 185.5M215.8 177.5L206.5 185.5" stroke="#c4c4c4" stroke-width="2"/>
<path d="M241.5 181.3L246 185.6L253.5 176.3" fill="none" stroke="#c4c4c4" stroke-width="2.2"/>
<text x="277.5" y="184" font-family="Liberation Serif" font-style="italic" font-weight="bold" font-size="13.5" fill="#555">f</text>
<text x="282.5" y="185.5" font-family="Liberation Serif" font-style="italic" font-weight="bold" font-size="9.5" fill="#555">x</text>
<path d="M23 208.5V220.5H11Z" fill="#bcbcbc"/>
<path d="M1062.3 178.8L1065.8 182.3L1069.3 178.8" fill="none" stroke="#6a6a6a" stroke-width="2"/>
<rect x="1058" y="204" width="21" height="463" fill="#e6e6e6"/>
<rect x="1061" y="485" width="15" height="168" fill="#d9d9d9"/>
<rect x="1061.5" y="206.5" width="14" height="14" fill="#fff" stroke="#bdbdbd"/>
<path d="M1064.5 215H1072.5L1068.5 211Z" fill="#6a6a6a"/>
<rect x="1061.5" y="220.5" width="14" height="264" fill="#fff" stroke="#b0b0b0"/>
<rect x="1061.5" y="652.5" width="14" height="14" fill="#fff" stroke="#bdbdbd"/>
<path d="M1064.5 658H1072.5L1068.5 662Z" fill="#6a6a6a"/>
<rect x="1" y="667" width="1078" height="28" fill="#e6e6e6"/>
<path d="M1 667.5H1058" stroke="#a8a8a8"/>
<path d="M32 677.5V684.5L28 681Z" fill="#c2c2c2"/>
<path d="M57.5 677.5V684.5L61.5 681Z" fill="#c2c2c2"/>
<rect x="101.5" y="667.5" width="106" height="23.5" fill="#fff" stroke="#a8a8a8"/>
<rect x="101" y="689.5" width="107" height="2.4" fill="#217346"/>
<circle cx="249" cy="681" r="7.4" fill="none" stroke="#7a7a7a" stroke-width="1.3"/>
<path d="M249 676.8V685.2M244.8 681H253.2" stroke="#7a7a7a" stroke-width="2"/>
<rect x="648" y="676" width="2" height="2" fill="#a8a8a8"/><rect x="648" y="680" width="2" height="2" fill="#a8a8a8"/><rect x="648" y="684" width="2" height="2" fill="#a8a8a8"/>
<rect x="665.5" y="674.5" width="391" height="14" fill="#d9d9d9" stroke="#d9d9d9"/>
<rect x="665.5" y="674.5" width="14" height="14" fill="#fff" stroke="#bdbdbd"/>
<path d="M674 678V685.5L670 681.75Z" fill="#6a6a6a"/>
<rect x="679.5" y="674.5" width="335" height="14" fill="#fff" stroke="#b0b0b0"/>
<rect x="1043.5" y="674.5" width="14" height="14" fill="#fff" stroke="#bdbdbd"/>
<path d="M1048.5 677.5V685.5L1052.5 681.5Z" fill="#6a6a6a"/>
<rect x="1" y="695" width="1078" height="22" fill="#f3f3f3"/>
<path d="M1 695.5H1079" stroke="#d6d6d6"/>
<rect x="74.5" y="702.8" width="11" height="9.2" fill="#fff" stroke="#6a6a6a" stroke-width="1.2"/>
<rect x="79.5" y="700" width="6.5" height="2.8" fill="#6a6a6a"/>
<circle cx="76.4" cy="702.6" r="3.3" fill="#6a6a6a"/>
<path d="M77 706.3H84.5M77 708.6H84.5M77 710.8H84.5" stroke="#6a6a6a" stroke-width="1" stroke-dasharray="1.6 0.9"/>
<rect x="779" y="696" width="38" height="21" fill="#c6c6c6"/>
<rect x="791.5" y="699.5" width="12" height="12" fill="none" stroke="#6a6a6a"/>
<path d="M795.5 699.5V711.5M799.5 699.5V711.5M791.5 703.5H803.5M791.5 707.5H803.5" stroke="#6a6a6a"/>
<rect x="829.5" y="699.5" width="13" height="12.5" fill="none" stroke="#6a6a6a"/>
<rect x="832.5" y="701.5" width="7" height="8.5" fill="none" stroke="#6a6a6a"/>
<path d="M834 703.5H838M834 705.5H838M834 707.5H838" stroke="#6a6a6a" stroke-width="0.9"/>
<rect x="867.5" y="699.5" width="13" height="12.5" fill="none" stroke="#6a6a6a"/>
<path d="M871 699.5V706.5H877.5V699.5M874.2 699.5V706.5" fill="none" stroke="#6a6a6a"/>
<path d="M897.6 705.6H903.6" stroke="#555" stroke-width="2"/>
<path d="M908.4 706.5H1008.3" stroke="#9a9a9a"/>
<rect x="956" y="700" width="5.5" height="11" fill="#6a6a6a"/>
<path d="M1011.5 706.1H1018.7M1015.1 702.5V709.7" stroke="#555" stroke-width="2"/>
</svg>
<div class="t" style="left:113px;top:675px;font-size:12.6px;font-weight:bold;color:#217346">microexcel.ru</div>
<div class="t" style="left:9px;top:699px;font-size:11.7px;color:#333">Готово</div>
<div class="t" style="left:1030px;top:700px;font-size:11.7px;color:#333">100 %</div>
<div style="left:0;top:0;width:1px;height:718px;background:#217346"></div>
<div style="left:1079px;top:0;width:1px;height:718px;background:#217346"></div>
<div style="left:0;top:717px;width:1080px;height:1px;background:#217346"></div>
</body></html>
